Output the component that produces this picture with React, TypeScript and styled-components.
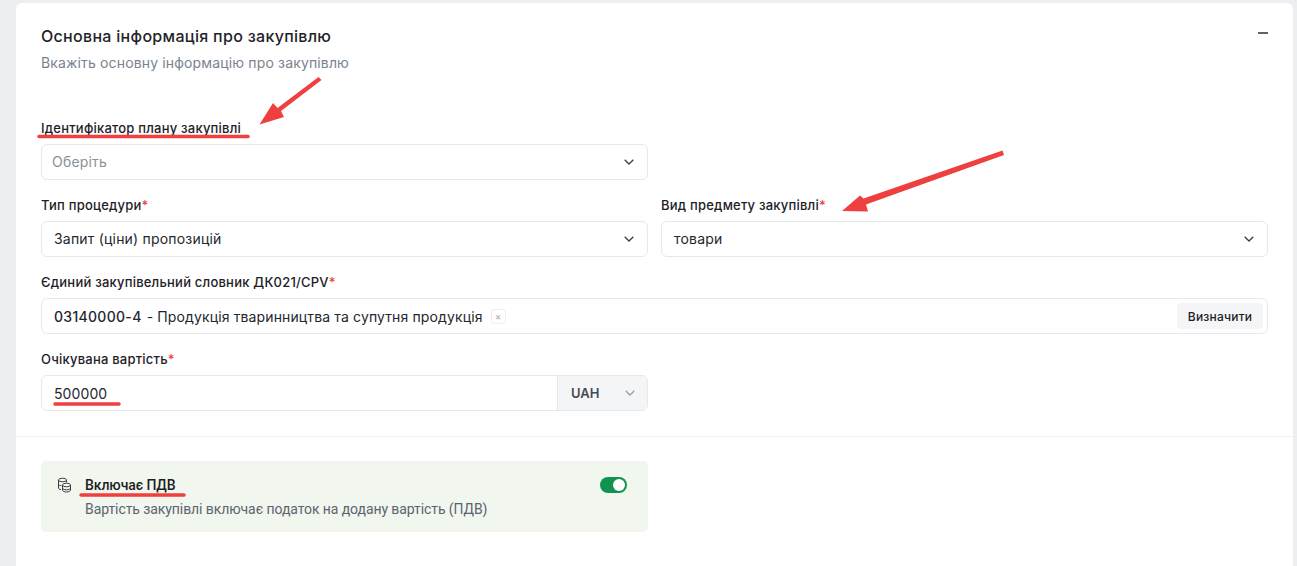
import { createGlobalStyle, styled } from "styled-components";

const GlobalStyle = createGlobalStyle`
  html, body {
    margin: 0;
    padding: 0;
    height: 566px;
    overflow: hidden;
    background: #eceef2;
    font-family: "Inter", "Liberation Sans", sans-serif;
  }
`;

const Page = styled.div`
  position: relative;
  width: 1297px;
  height: 566px;
  padding: 3px 4px 0 16px;
  box-sizing: border-box;
  overflow: hidden;
`;

const Card = styled.section`
  height: 600px;
  background: #fff;
  border-radius: 6px 6px 0 0;
`;

const CardTop = styled.div`
  padding: 23px 25px 25px;
  border-bottom: 1px solid #f1f2f4;
`;

const Header = styled.header`
  display: flex;
  justify-content: space-between;
  align-items: flex-start;
  height: 52px;
  margin-bottom: 42px;
`;

const Title = styled.h2`
  margin: 0 0 7px;
  font-size: 16px;
  line-height: 20px;
  font-weight: 500;
  letter-spacing: 0.3px;
  color: #1f2329;
`;

const Subtitle = styled.p`
  margin: 0;
  font-size: 14px;
  line-height: 20px;
  letter-spacing: 0.15px;
  color: #7a8390;
`;

const Collapse = styled.span`
  display: block;
  width: 10px;
  height: 2px;
  margin: 6px 0 0;
  background: #5f6368;
`;

const FormGrid = styled.div`
  display: grid;
  grid-template-columns: 607px 607px;
  column-gap: 13px;
  row-gap: 17px;
`;

const Field = styled.div<{ $wide?: boolean }>`
  grid-column: ${({ $wide }) => ($wide ? "1 / 3" : "auto")};
`;

const Label = styled.label`
  display: block;
  height: 16px;
  margin-bottom: 8px;
  font-size: 13px;
  line-height: 17px;
  font-weight: 500;
  letter-spacing: 0.22px;
  color: #1d2127;
  white-space: nowrap;

  b {
    color: #ef3d3d;
    font-weight: 500;
  }
`;

const Control = styled.div`
  display: flex;
  align-items: center;
  justify-content: space-between;
  height: 36px;
  box-sizing: border-box;
  padding: 0 13px 1px 12px;
  border: 1px solid #e7e8eb;
  border-radius: 6px;
  background: #fff;
  font-size: 14px;
  letter-spacing: 0.2px;
  color: #23272e;
`;

const Placeholder = styled.span`
  margin-left: -2px;
  color: #8b9097;
`;

const Chevron = styled.svg<{ $muted?: boolean }>`
  width: 10px;
  height: 6px;
  fill: none;
  stroke: ${({ $muted }) => ($muted ? "#9a9fa6" : "#3a3f46")};
  stroke-width: 1.3;
  flex-shrink: 0;
`;

const CpvControl = styled(Control)`
  padding: 0 4px 0 12px;
`;

const CpvValue = styled.div`
  display: flex;
  align-items: center;
  letter-spacing: 0.13px;
`;

const CpvCode = styled.span`
  font-weight: 500;
  letter-spacing: 0.3px;
  margin-right: 5px;
`;

const TagRemove = styled.span`
  display: flex;
  align-items: center;
  justify-content: center;
  width: 13px;
  height: 13px;
  margin-left: 8px;
  border: 1px solid #edeef0;
  border-radius: 3px;
  font-size: 10px;
  line-height: 1;
  color: #a5a9af;
`;

const DefineButton = styled.button`
  height: 26px;
  width: 86px;
  padding: 0;
  border: none;
  border-radius: 4px;
  background: #f4f5f7;
  font-family: inherit;
  font-size: 12px;
  font-weight: 500;
  letter-spacing: 0.2px;
  color: #1d2127;
`;

const AmountGroup = styled.div`
  display: flex;
  height: 36px;
  box-sizing: border-box;
  border: 1px solid #e7e8eb;
  border-radius: 6px;
  overflow: hidden;
  font-size: 14px;
  color: #23272e;
`;

const AmountValue = styled.div`
  flex: 1;
  display: flex;
  align-items: center;
  padding-left: 12px;
  letter-spacing: 0.1px;
  border-right: 1px solid #e7e8eb;
`;

const Currency = styled.div`
  display: flex;
  align-items: center;
  justify-content: space-between;
  width: 89px;
  box-sizing: border-box;
  padding: 0 12px 0 13px;
  background: #f4f5f7;
  font-size: 13px;
  font-weight: 600;
  color: #454a52;
`;

const CardBottom = styled.div`
  padding: 24px 25px;
`;

const VatBox = styled.div`
  display: flex;
  width: 607px;
  height: 71px;
  box-sizing: border-box;
  padding: 16px 21px 0 16px;
  border-radius: 5px;
  background: #f1f6ee;
`;

const VatIcon = styled.svg`
  width: 15px;
  height: 16px;
  margin: 0 13px 0 0;
  fill: none;
  stroke: #3c4046;
  stroke-width: 1;
  flex-shrink: 0;
`;

const VatText = styled.div`
  flex: 1;
`;

const VatTitle = styled.div`
  font-family: "Roboto", sans-serif;
  font-size: 14px;
  line-height: 16px;
  font-weight: 500;
  letter-spacing: -0.08px;
  color: #1c1f24;
  margin-bottom: 8px;
`;

const VatHint = styled.div`
  font-family: "Roboto", sans-serif;
  font-size: 14px;
  line-height: 16px;
  letter-spacing: -0.08px;
  color: #5c6470;
`;

const Toggle = styled.span`
  position: relative;
  display: block;
  width: 27px;
  height: 16px;
  border-radius: 8px;
  background: #12924f;

  &::after {
    content: "";
    position: absolute;
    top: 2px;
    right: 2px;
    width: 12px;
    height: 12px;
    border-radius: 50%;
    background: #fff;
  }
`;

const Annotations = styled.svg`
  position: absolute;
  inset: 0;
  width: 1297px;
  height: 566px;
  pointer-events: none;
`;

const Arrow = styled.path`
  fill: #ef4040;
  stroke: none;
`;

const Underline = styled.line`
  stroke: #ef3f3f;
  stroke-width: 3.5;
  stroke-linecap: round;
`;

function ChevronDown({ muted }: { muted?: boolean }) {
  return (
    <Chevron $muted={muted} viewBox="0 0 10 6">
      <path d="M.7.7L5 5l4.300-4.300" />
    </Chevron>
  );
}

function App() {
  return (
    <Page>
      <GlobalStyle />
      <Card>
        <CardTop>
          <Header>
            <div>
              <Title>Основна інформація про закупівлю</Title>
              <Subtitle>Вкажіть основну інформацію про закупівлю</Subtitle>
            </div>
            <Collapse />
          </Header>
          <FormGrid>
            <Field>
              <Label>Ідентифікатор плану закупівлі</Label>
              <Control>
                <Placeholder>Оберіть</Placeholder>
                <ChevronDown />
              </Control>
            </Field>
            <div />
            <Field>
              <Label>
                Тип процедури<b>*</b>
              </Label>
              <Control>
                Запит (ціни) пропозицій
                <ChevronDown />
              </Control>
            </Field>
            <Field>
              <Label>
                Вид предмету закупівлі<b>*</b>
              </Label>
              <Control>
                товари
                <ChevronDown />
              </Control>
            </Field>
            <Field $wide>
              <Label>
                Єдиний закупівельний словник ДК021/CPV<b>*</b>
              </Label>
              <CpvControl>
                <CpvValue>
                  <CpvCode>03140000-4</CpvCode>- Продукція тваринництва та
                  супутня продукція
                  <TagRemove>×</TagRemove>
                </CpvValue>
                <DefineButton>Визначити</DefineButton>
              </CpvControl>
            </Field>
            <Field>
              <Label>
                Очікувана вартість<b>*</b>
              </Label>
              <AmountGroup>
                <AmountValue>500000</AmountValue>
                <Currency>
                  UAH
                  <ChevronDown muted />
                </Currency>
              </AmountGroup>
            </Field>
          </FormGrid>
        </CardTop>
        <CardBottom>
          <VatBox>
            <VatIcon viewBox="0 0 15 16">
              <ellipse cx="5.500" cy="3" rx="4" ry="1.800" />
              <path d="M1.500 3v8c0 .8 1 1.400 2.500 1.600M9.500 3v2.500M1.500 7c0 .9 1.200 1.600 3 1.700" />
              <ellipse cx="9.500" cy="8" rx="4" ry="1.800" />
              <path d="M5.500 8v5.200c0 1 1.800 1.800 4 1.800s4-.8 4-1.800V8M5.500 11c0 1 1.800 1.800 4 1.800s4-.8 4-1.800" />
            </VatIcon>
            <VatText>
              <VatTitle>Включає ПДВ</VatTitle>
              <VatHint>Вартість закупівлі включає податок на додану вартість (ПДВ)</VatHint>
            </VatText>
            <Toggle />
          </VatBox>
        </CardBottom>
      </Card>
      <Annotations viewBox="0 0 1297 566">
        <Arrow d="M318.500 77L321.500 80L281 111L284 117L259.500 124.500L273 103L277.500 108Z" />
        <Arrow d="M1002.500 150.500L1004 155L866 204.500L868 211.500L842 211L860 195.500L863.500 198.500Z" />
        <Underline x1="39" y1="136.500" x2="248" y2="136.500" />
        <Underline x1="55" y1="404" x2="119" y2="404" />
        <Underline x1="81" y1="495" x2="184" y2="495" />
      </Annotations>
    </Page>
  );
}

export default App;
